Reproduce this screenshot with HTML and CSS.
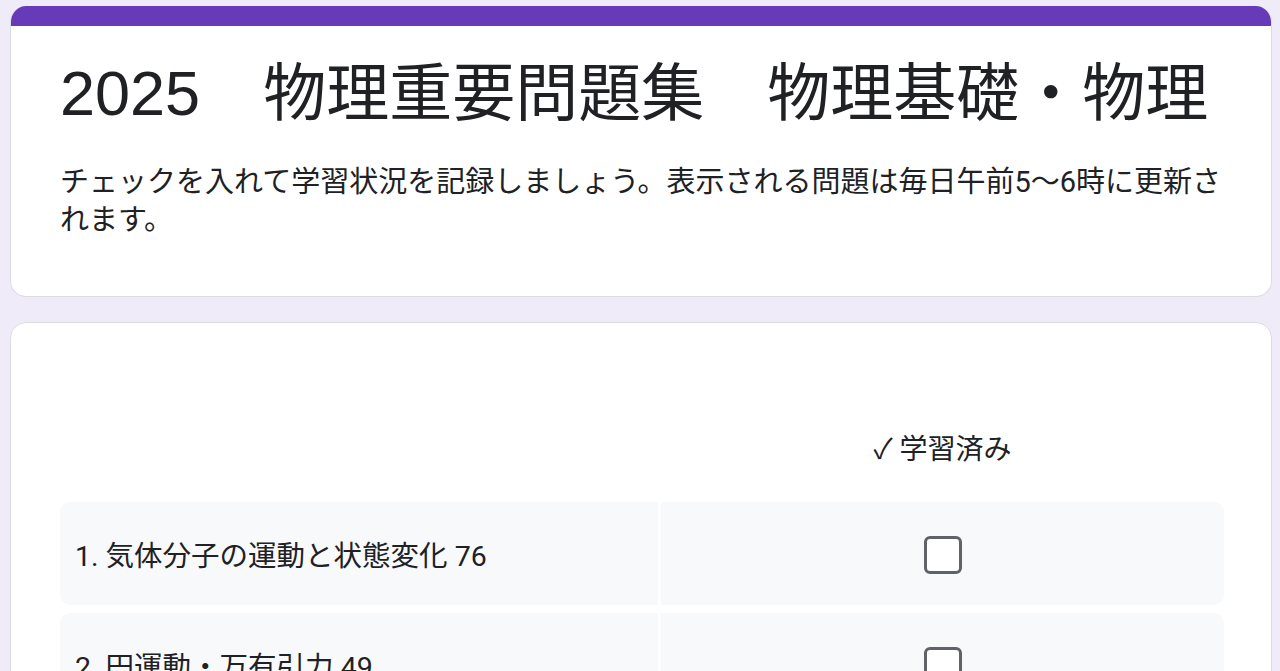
FILE: index.html
```html
<!DOCTYPE html>
<html lang="ja">
<head>
<meta charset="utf-8">
<title>2025 物理重要問題集</title>
<link rel="stylesheet" href="styles.css">
</head>
<body>
<div class="page">
  <div class="card card-head">
    <div class="band"></div>
    <div class="head-body">
      <h1 class="title">2025　物理重要問題集　物理基礎・物理</h1>
      <p class="desc">チェックを入れて学習状況を記録しましょう。表示される問題は毎日午前5〜6時に更新されます。</p>
    </div>
  </div>
  <div class="card card-grid">
    <div class="grid">
      <div class="hcell"></div>
      <div class="hcell hlabel">✓ 学習済み</div>

      <div class="cell label">1. 気体分子の運動と状態変化 76</div>
      <div class="cell check"><span class="box"></span></div>

      <div class="cell label">2. 円運動・万有引力 49</div>
      <div class="cell check"><span class="box"></span></div>
    </div>
  </div>
</div>
</body>
</html>
```
FILE: styles.css
```css
html, body {
  margin: 0;
  padding: 0;
}
body {
  background: #f0ebf8;
  color: #202124;
  font-family: Roboto, "Noto Sans CJK JP", sans-serif;
  height: 671px;
  overflow: hidden;
}
.page {
  padding: 6px 8px 0 10px;
  display: flex;
  flex-direction: column;
  gap: 25px;
}
.card {
  background: #fff;
  border: 1px solid #dadce0;
  border-radius: 16px;
  overflow: hidden;
}
.card-head {
  border-top: none;
}
.band {
  height: 20px;
  background: #673ab7;
}
.head-body {
  padding: 27px 46px 57px 49px;
}
.title {
  margin: 0;
  font-family: "Liberation Sans", "Noto Sans CJK JP", sans-serif;
  font-weight: 400;
  font-size: 63px;
  line-height: 80px;
  color: #202124;
  white-space: nowrap;
}
.desc {
  margin: 30px 0 0 0;
  font-size: 29px;
  line-height: 38px;
  color: #202124;
}
.card-grid {
  padding: 0 47px 0 49px;
  height: 400px;
}
.grid {
  display: grid;
  grid-template-columns: 598px 1fr;
  column-gap: 3px;
  row-gap: 8px;
}
.hcell {
  padding: 108px 0 25px 0;
  height: 38px;
}
.hlabel {
  text-align: center;
  font-size: 28px;
  line-height: 38px;
}
.cell {
  background: #f8f9fa;
  height: 103px;
  display: flex;
  align-items: center;
}
.label {
  padding-left: 15px;
  font-size: 28.5px;
  border-radius: 10px 0 0 10px;
}
.check {
  justify-content: center;
  border-radius: 0 10px 10px 0;
}
.box {
  display: block;
  width: 38px;
  height: 38px;
  box-sizing: border-box;
  border: 3.5px solid #5f6368;
  border-radius: 6px;
  background: #fff;
  margin-top: 3px;
}
```
